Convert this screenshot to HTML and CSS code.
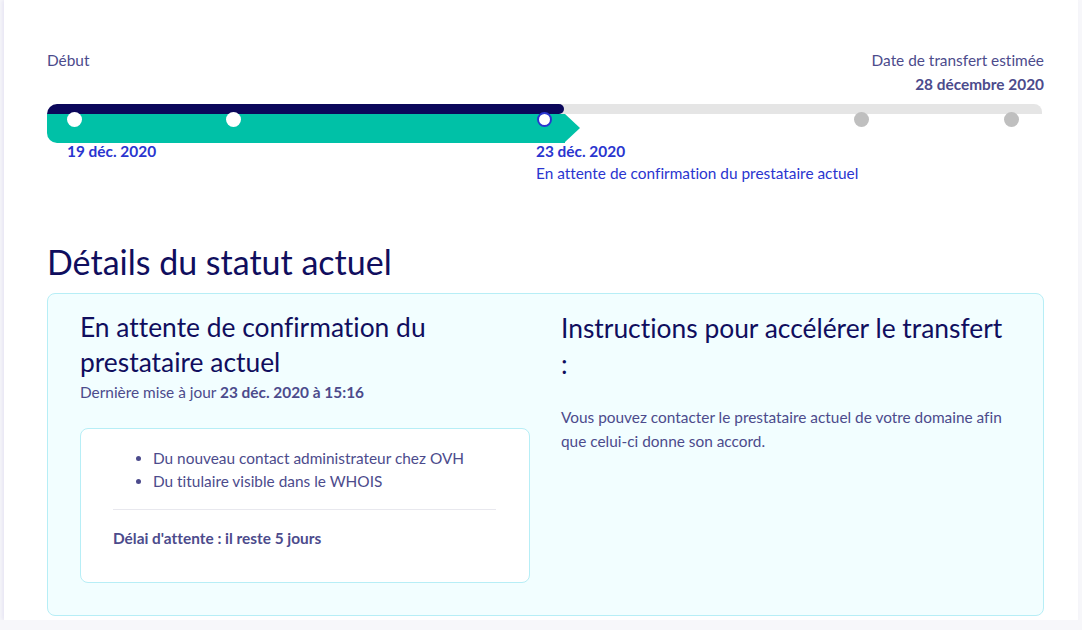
FILE: index.html
```html
<!DOCTYPE html>
<html lang="fr">
<head>
<meta charset="utf-8">
<title>Transfert</title>
<link rel="stylesheet" href="styles.css">
</head>
<body>
<div class="page">
  <div class="tl-head">
    <div class="tl-start">Début</div>
    <div class="tl-end">
      <div>Date de transfert estimée</div>
      <div class="tl-end-date">28 décembre 2020</div>
    </div>
  </div>

  <div class="track">
    <div class="track-rest"></div>
    <div class="track-done">
      <div class="track-navy"></div>
      <div class="track-teal"></div>
    </div>
    <span class="dot dot-done" style="left:27px"></span>
    <span class="dot dot-done" style="left:186px"></span>
    <span class="dot dot-current" style="left:497px"></span>
    <span class="dot dot-todo" style="left:814px"></span>
    <span class="dot dot-todo" style="left:964px"></span>
  </div>

  <div class="tl-labels">
    <div class="tl-label" style="left:20px">
      <div class="tl-date">19 déc. 2020</div>
    </div>
    <div class="tl-label" style="left:489px">
      <div class="tl-date">23 déc. 2020</div>
      <div class="tl-step">En attente de confirmation du prestataire actuel</div>
    </div>
  </div>

  <h2 class="section-title">Détails du statut actuel</h2>

  <div class="card">
    <div class="col">
      <h3 class="col-title">En attente de confirmation du prestataire actuel</h3>
      <div class="updated">Dernière mise à jour <strong>23 déc. 2020 à 15:16</strong></div>
      <div class="box">
        <ul class="box-list">
          <li>Du nouveau contact administrateur chez OVH</li>
          <li>Du titulaire visible dans le WHOIS</li>
        </ul>
        <hr class="box-sep">
        <div class="box-delay">Délai d'attente : il reste 5 jours</div>
      </div>
    </div>
    <div class="col">
      <h3 class="col-title col-title-right">Instructions pour accélérer le transfert :</h3>
      <p class="col-text">Vous pouvez contacter le prestataire actuel de votre domaine afin que celui-ci donne son accord.</p>
    </div>
  </div>
</div>
</body>
</html>
```

FILE: styles.css
```css
* { box-sizing: border-box; }

html, body {
  margin: 0;
  padding: 0;
}

body {
  background: #f7f7fa;
  font-family: "Lato", "Source Sans Pro", "Noto Sans", sans-serif;
  font-size: 15.4px;
  color: #4c4b8c;
  font-variant-ligatures: none;
}

.page {
  background: #ffffff;
  margin: 0 4px 0 4px;
  width: 1074px;
  height: 620px;
  padding: 48px 34px 0 43px;
  box-shadow: -2px 0 4px rgba(120, 110, 200, 0.12);
}

.tl-head {
  display: flex;
  justify-content: space-between;
  align-items: flex-start;
  line-height: 24px;
}

.tl-end {
  text-align: right;
}

.tl-end-date {
  font-weight: 700;
}

.track {
  position: relative;
  height: 39px;
  margin-top: 8px;
  width: 995px;
}

.track-rest {
  position: absolute;
  left: 500px;
  right: 0;
  top: 0;
  height: 10px;
  background: #e5e5e5;
  border-top-right-radius: 8px;
}

.track-done {
  position: absolute;
  left: 0;
  top: 0;
  width: 533px;
  height: 39px;
}

.track-navy {
  width: 517px;
  height: 10px;
  background: #0b075a;
  border-radius: 10px 5px 5px 0;
}

.track-teal {
  position: relative;
  width: 518px;
  height: 29px;
  background: #00c1a7;
  border-bottom-left-radius: 10px;
}

.track-teal::after {
  content: "";
  position: absolute;
  left: 518px;
  top: 0;
  border-top: 14.5px solid transparent;
  border-bottom: 14.5px solid transparent;
  border-left: 15px solid #00c1a7;
}

.dot {
  position: absolute;
  top: 8px;
  width: 15px;
  height: 15px;
  margin-left: -7.5px;
  border-radius: 50%;
}

.dot-done { background: #ffffff; }

.dot-current {
  background: #ffffff;
  border: 2px solid #2a35cf;
}

.dot-todo { background: #bfbfbf; }

.tl-labels {
  position: relative;
  height: 44px;
  margin-top: -3px;
}

.tl-label {
  position: absolute;
  top: 0;
  line-height: 22px;
  color: #2a35cf;
  white-space: nowrap;
}

.tl-date {
  font-weight: 700;
}

.section-title {
  margin: 58px 0 11px;
  font-size: 34px;
  line-height: 40px;
  font-weight: 400;
  color: #100e5e;
}

.card {
  display: grid;
  grid-template-columns: 1fr 1fr;
  column-gap: 31px;
  width: 997px;
  padding: 16px 32px 32px;
  background: #f2feff;
  border: 1px solid #b7eef6;
  border-radius: 8px;
}

.col-title {
  margin: 0;
  font-size: 26.4px;
  line-height: 35px;
  font-weight: 400;
  color: #100e5e;
}

.col-title-right {
  line-height: 36px;
}

.updated {
  margin-top: 2px;
  line-height: 20px;
}

.updated strong {
  font-weight: 700;
}

.box {
  margin-top: 26px;
  padding: 18px 33px 32px 32px;
  background: #ffffff;
  border: 1px solid #b7eef6;
  border-radius: 8px;
}

.box-list {
  margin: 0;
  padding-left: 40px;
  line-height: 23px;
}

.box-sep {
  margin: 16px 0 16px;
  border: 0;
  border-top: 1px solid #e8e8ee;
}

.box-delay {
  font-weight: 700;
  line-height: 24px;
}

.col-text {
  margin: 23px 0 0;
  line-height: 24px;
}
```
